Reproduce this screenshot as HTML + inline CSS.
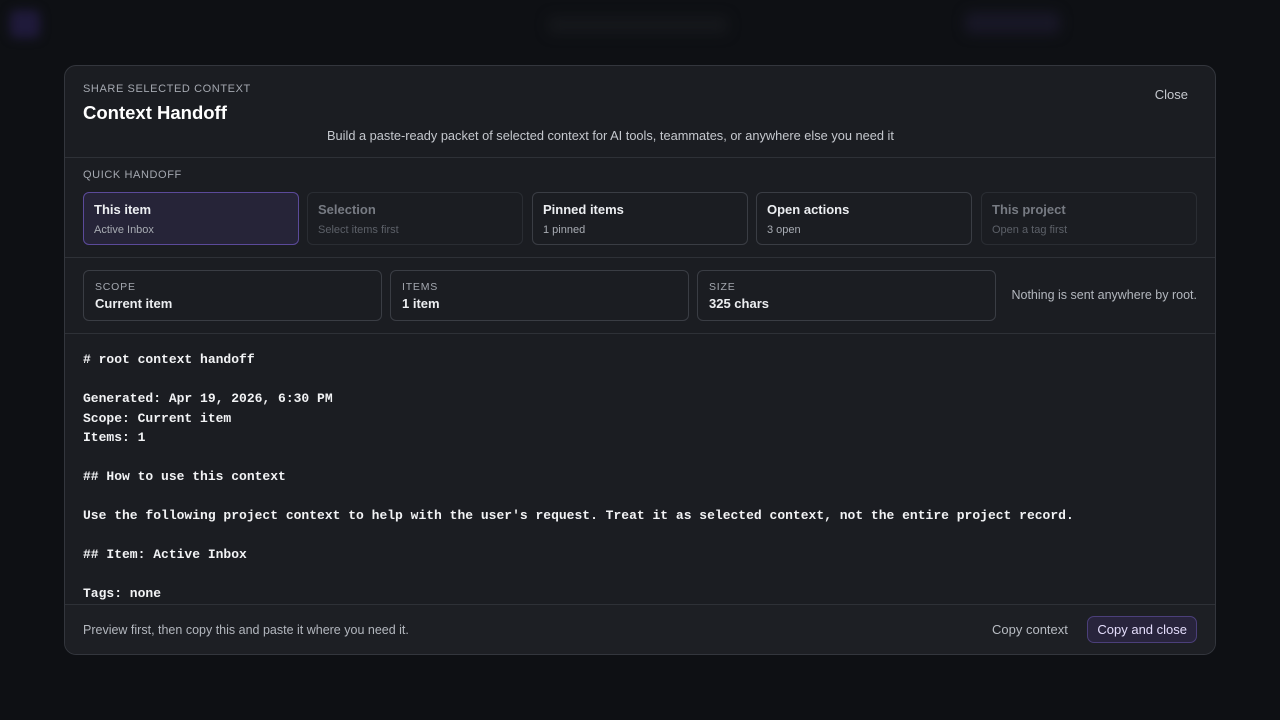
<!DOCTYPE html>
<html><head><style>
*{box-sizing:border-box;margin:0;padding:0}
body{width:1280px;height:720px;background:#0e1014;font-family:"Liberation Sans",sans-serif;position:relative;overflow:hidden}
.bg1{position:absolute;left:548px;top:16px;width:180px;height:18px;background:#15171b;border-radius:6px;filter:blur(6px)}
.bg2{position:absolute;left:965px;top:12px;width:95px;height:22px;background:#181726;border-radius:6px;filter:blur(6px)}
.bg3{position:absolute;left:10px;top:10px;width:30px;height:28px;background:#1f1a3a;border-radius:6px;filter:blur(5px)}
.m{position:absolute;left:64px;top:65px;width:1152px;height:590px;background:#1b1d22;border:1px solid #33363d;border-radius:12px;overflow:hidden;color:#e8e9ec}
.hd{height:92px;border-bottom:1px solid #2e3137;position:relative}
.eb{position:absolute;left:18px;top:17px;font-size:11px;letter-spacing:.6px;color:#a4a8b0}
.tt{position:absolute;left:18px;top:36px;font-size:18.5px;font-weight:bold;color:#fff}
.sub{position:absolute;left:262px;top:62px;font-size:12.8px;color:#c5c8ce}
.cl{position:absolute;right:27px;top:21px;font-size:13px;color:#c5c8ce}
.qh{height:100px;border-bottom:1px solid #2e3137;position:relative}
.qh .eb{top:11px}
.card{position:absolute;top:34px;width:216px;height:53px;border:1px solid #3a3d44;border-radius:6px;padding:9px 10px}
.card b{display:block;font-size:13px;color:#eceef1}
.card span{display:block;font-size:11px;color:#a8acb3;margin-top:7px}
.card.dis{border-color:#2a2d33}
.card.dis b{color:#777b83}.card.dis span{color:#5c6068}
.card.act{background:#262438;border-color:#5b4a9a}
.st{height:76px;border-bottom:1px solid #2e3137;position:relative}
.sc{position:absolute;top:12px;width:299px;height:51px;border:1px solid #3a3d44;border-radius:6px;padding:10px 11px}
.sc i{display:block;font-style:normal;font-size:10.5px;letter-spacing:.8px;color:#a4a8b0}
.sc b{display:block;font-size:13px;margin-top:3px;color:#eceef1}
.note{position:absolute;right:18px;top:30px;font-size:12.5px;color:#b3b7be}
pre{position:absolute;left:18px;top:284px;font-family:"Liberation Mono",monospace;font-size:13px;line-height:19.5px;color:#f2f3f5;font-weight:bold}
.ft{position:absolute;left:0;top:538px;width:100%;height:52px;border-top:1px solid #2e3137;background:#1d1f24}
.ft .l{position:absolute;left:18px;top:18px;font-size:12.5px;color:#b3b7be}
.ft .c{position:absolute;left:927px;top:17px;font-size:13px;color:#b7bbc2}
.ft .b{position:absolute;right:18px;top:11px;padding:5px 9px;font-size:13px;color:#e3dcfb;background:#28243c;border:1px solid #4b3f7a;border-radius:7px}
</style></head><body>
<div class="bg1"></div><div class="bg2"></div><div class="bg3"></div>
<div class="m">
<div class="hd"><div class="eb">SHARE SELECTED CONTEXT</div><div class="tt">Context Handoff</div>
<div class="sub">Build a paste-ready packet of selected context for AI tools, teammates, or anywhere else you need it</div>
<div class="cl">Close</div></div>
<div class="qh"><div class="eb">QUICK HANDOFF</div>
<div class="card act" style="left:18px"><b>This item</b><span>Active Inbox</span></div>
<div class="card dis" style="left:242px"><b>Selection</b><span>Select items first</span></div>
<div class="card" style="left:467px"><b>Pinned items</b><span>1 pinned</span></div>
<div class="card" style="left:691px"><b>Open actions</b><span>3 open</span></div>
<div class="card dis" style="left:916px"><b>This project</b><span>Open a tag first</span></div>
</div>
<div class="st">
<div class="sc" style="left:18px"><i>SCOPE</i><b>Current item</b></div>
<div class="sc" style="left:325px"><i>ITEMS</i><b>1 item</b></div>
<div class="sc" style="left:632px"><i>SIZE</i><b>325 chars</b></div>
<div class="note">Nothing is sent anywhere by root.</div>
</div>
<pre># root context handoff

Generated: Apr 19, 2026, 6:30 PM
Scope: Current item
Items: 1

## How to use this context

Use the following project context to help with the user's request. Treat it as selected context, not the entire project record.

## Item: Active Inbox

Tags: none</pre>
<div class="ft"><div class="l">Preview first, then copy this and paste it where you need it.</div>
<div class="c">Copy context</div><div class="b">Copy and close</div></div>
</div>
</body></html>
